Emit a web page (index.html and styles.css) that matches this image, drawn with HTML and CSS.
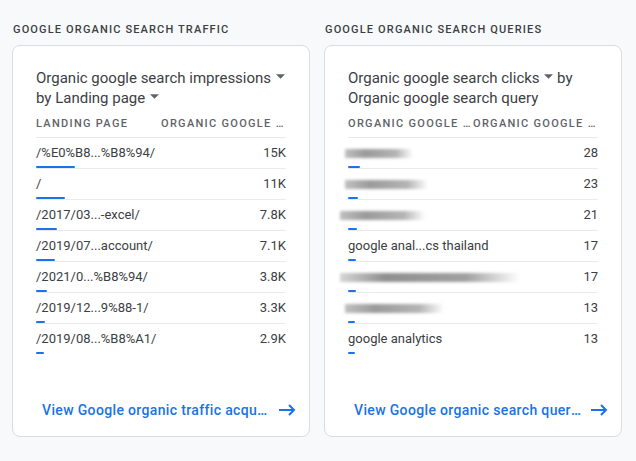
FILE: index.html
```html
<!DOCTYPE html>
<html>
<head>
<meta charset="utf-8">
<link rel="stylesheet" href="styles.css">
</head>
<body>
<div class="page">
  <section class="panel">
    <h2 class="section-title">Google organic search traffic</h2>
    <div class="card">
      <div class="card-title">Organic google search impressions <svg class="drop" viewBox="0 0 10 5"><path d="M0 0h10L5 5z"/></svg><br>by Landing page <svg class="drop" viewBox="0 0 10 5"><path d="M0 0h10L5 5z"/></svg></div>
      <div class="table">
        <div class="thead">
          <div class="th">Landing page</div>
          <div class="th right">Organic google search impressions</div>
        </div>
        <div class="row"><div class="cells"><span class="name">/%E0%B8...%B8%94/</span><span class="val">15K</span></div><div class="bar" style="width:39px"></div></div>
        <div class="row"><div class="cells"><span class="name">/</span><span class="val">11K</span></div><div class="bar" style="width:29px"></div></div>
        <div class="row"><div class="cells"><span class="name">/2017/03...-excel/</span><span class="val">7.8K</span></div><div class="bar" style="width:21px"></div></div>
        <div class="row"><div class="cells"><span class="name">/2019/07...account/</span><span class="val">7.1K</span></div><div class="bar" style="width:19px"></div></div>
        <div class="row"><div class="cells"><span class="name">/2021/0...%B8%94/</span><span class="val">3.8K</span></div><div class="bar" style="width:11px"></div></div>
        <div class="row"><div class="cells"><span class="name">/2019/12...9%88-1/</span><span class="val">3.3K</span></div><div class="bar" style="width:9px"></div></div>
        <div class="row last"><div class="cells"><span class="name">/2019/08...%B8%A1/</span><span class="val">2.9K</span></div><div class="bar" style="width:8px"></div></div>
      </div>
      <a class="footer-link" href="#"><span class="link-text">View Google organic traffic acquisition</span><svg class="arrow" viewBox="0 0 17 12"><path d="M0 6h15M10 1l5 5-5 5"/></svg></a>
    </div>
  </section>
  <section class="panel">
    <h2 class="section-title">Google organic search queries</h2>
    <div class="card">
      <div class="card-title">Organic google search clicks <svg class="drop" viewBox="0 0 10 5"><path d="M0 0h10L5 5z"/></svg> by<br>Organic google search query</div>
      <div class="table">
        <div class="thead">
          <div class="th">Organic google search query</div>
          <div class="th right">Organic google search clicks</div>
        </div>
        <div class="row"><div class="cells"><span class="name"><span class="smear" style="width:68px;margin-left:-3px"></span></span><span class="val">28</span></div><div class="bar" style="width:12px"></div></div>
        <div class="row"><div class="cells"><span class="name"><span class="smear" style="width:83px;margin-left:-3px"></span></span><span class="val">23</span></div><div class="bar" style="width:10px"></div></div>
        <div class="row"><div class="cells"><span class="name"><span class="smear" style="width:85px;margin-left:-8px"></span></span><span class="val">21</span></div><div class="bar" style="width:9px"></div></div>
        <div class="row"><div class="cells"><span class="name">google anal...cs thailand</span><span class="val">17</span></div><div class="bar" style="width:8px"></div></div>
        <div class="row"><div class="cells"><span class="name"><span class="smear long" style="width:180px;margin-left:-8px"></span></span><span class="val">17</span></div><div class="bar" style="width:8px"></div></div>
        <div class="row"><div class="cells"><span class="name"><span class="smear" style="width:99px;margin-left:-3px"></span></span><span class="val">13</span></div><div class="bar" style="width:7px"></div></div>
        <div class="row last"><div class="cells"><span class="name">google analytics</span><span class="val">13</span></div><div class="bar" style="width:7px"></div></div>
      </div>
      <a class="footer-link" href="#"><span class="link-text">View Google organic search queries</span><svg class="arrow" viewBox="0 0 17 12"><path d="M0 6h15M10 1l5 5-5 5"/></svg></a>
    </div>
  </section>
</div>
</body>
</html>
```
FILE: styles.css
```css
* { box-sizing: border-box; }
html, body { margin: 0; padding: 0; }
body {
  background: #f8f9fa;
  font-family: Roboto, "Liberation Sans", Arial, sans-serif;
  color: #3c4043;
  width: 636px;
  height: 461px;
  overflow: hidden;
}
.page {
  display: flex;
  gap: 14px;
  padding: 22px 14px 0 12px;
}
.panel {
  width: 298px;
  display: flex;
  flex-direction: column;
}
.section-title {
  margin: 0 0 7px 1px;
  font-size: 11px;
  line-height: 16px;
  font-weight: 500;
  letter-spacing: 1.15px;
  text-transform: uppercase;
  color: #3c4043;
}
.card {
  background: #fff;
  border: 1px solid #dadce0;
  border-radius: 8px;
  height: 392px;
  padding: 23px 23px 16px 23px;
  display: flex;
  flex-direction: column;
}
.card-title {
  font-size: 15px;
  line-height: 19.5px;
  color: #3c4043;
}
.drop {
  width: 9px;
  height: 5px;
  fill: #5f6368;
  vertical-align: 4px;
  margin-left: 1px;
}
.table {
  margin-top: 8px;
}
.thead {
  display: flex;
  border-bottom: 1px solid #e8eaed;
  padding-bottom: 5px;
}
.th {
  width: 50%;
  font-size: 11px;
  line-height: 16px;
  font-weight: 500;
  letter-spacing: 1.3px;
  text-transform: uppercase;
  color: #5f6368;
  white-space: nowrap;
  overflow: hidden;
  text-overflow: ellipsis;
}
.th.right { text-align: right; }
.row {
  border-bottom: 1px solid #e8eaed;
  padding-top: 5px;
}
.row.last { border-bottom: none; }
.cells {
  display: flex;
  justify-content: space-between;
  font-size: 13px;
  line-height: 20px;
  color: #3c4043;
  height: 20px;
}
.name {
  white-space: nowrap;
  display: flex;
  align-items: center;
}
.val { color: #3c4043; }
.bar {
  height: 2px;
  margin-top: 3px;
  background: #1a73e8;
  border-radius: 1px;
}
.smear {
  display: block;
  height: 9px;
  background: linear-gradient(to right, rgba(140,140,140,0.55), rgba(120,120,120,0.75) 30%, rgba(130,130,130,0.6) 75%, rgba(170,170,170,0));
  filter: blur(1.6px);
}
.smear.long {
  background: linear-gradient(to right, rgba(150,150,150,0.4), rgba(115,115,115,0.8) 25%, rgba(120,120,120,0.7) 70%, rgba(170,170,170,0));
}
.footer-link {
  margin: auto -10px 0 6px;
  display: flex;
  align-items: center;
  text-decoration: none;
  color: #1a73e8;
  font-size: 14px;
  line-height: 20px;
  font-weight: 500;
  letter-spacing: 0.35px;
}
.link-text {
  flex: 1;
  min-width: 0;
  white-space: nowrap;
  overflow: hidden;
  text-overflow: ellipsis;
}
.arrow {
  width: 17px;
  height: 12px;
  margin-left: 9px;
  fill: none;
  stroke: #1a73e8;
  stroke-width: 2;
  flex: none;
}
```
